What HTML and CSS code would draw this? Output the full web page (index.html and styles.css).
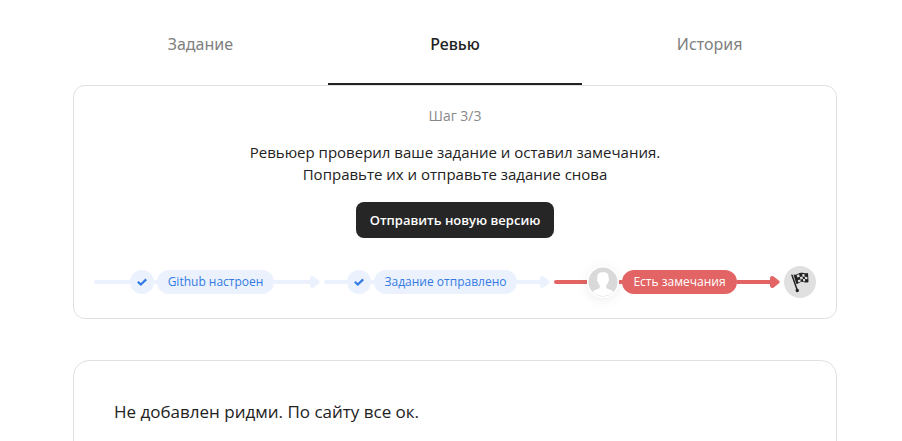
FILE: index.html
```html
<!DOCTYPE html>
<html lang="ru">
<head>
<meta charset="utf-8">
<meta name="viewport" content="width=device-width, initial-scale=1">
<title>Ревью</title>
<link rel="stylesheet" href="styles.css">
</head>
<body>
<main class="page">
  <nav class="tabs">
    <a class="tab" href="#task">Задание</a>
    <a class="tab tab-active" href="#review" aria-current="page">Ревью</a>
    <a class="tab" href="#history">История</a>
  </nav>
  <section class="card status">
    <p class="step-count">Шаг 3/3</p>
    <p class="message">Ревьюер проверил ваше задание и оставил замечания.<br>Поправьте их и отправьте задание снова</p>
    <button class="submit" type="button">Отправить новую версию</button>
    <div class="progress">
      <div class="step">
        <span class="line line-start"></span>
        <span class="mark"><svg width="10" height="8" viewBox="0 0 10 8"><path d="M.8 3.700 3.800 6.500 9.200 1.400" fill="none" stroke="currentColor" stroke-width="2.200"/></svg></span>
        <span class="line line-link"></span>
        <span class="pill">Github настроен</span>
        <span class="line"></span>
        <svg class="arrow" width="10" height="12" viewBox="0 0 10 12"><path d="M0 2.200C0 .2 2.200-.6 3.700.6L9 4.700c.9.7.9 1.900 0 2.600l-5.300 4.100C2.200 12.600 0 11.800 0 9.800z" fill="currentColor"/></svg>
      </div>
      <div class="step">
        <span class="line line-start"></span>
        <span class="mark"><svg width="10" height="8" viewBox="0 0 10 8"><path d="M.8 3.700 3.800 6.500 9.200 1.400" fill="none" stroke="currentColor" stroke-width="2.200"/></svg></span>
        <span class="line line-link"></span>
        <span class="pill">Задание отправлено</span>
        <span class="line"></span>
        <svg class="arrow" width="10" height="12" viewBox="0 0 10 12"><path d="M0 2.200C0 .2 2.200-.6 3.700.6L9 4.700c.9.7.9 1.900 0 2.600l-5.300 4.100C2.200 12.600 0 11.800 0 9.800z" fill="currentColor"/></svg>
      </div>
      <div class="step step-current">
        <span class="line line-start"></span>
        <svg class="avatar" width="32" height="32" viewBox="0 0 32 32">
          <circle cx="16" cy="16" r="16" fill="#fff"/>
          <circle cx="16" cy="16" r="14.500" fill="#d9d9d9"/>
          <path d="M16.200 6.200c3.800-.5 6 2.200 5.400 6.100.8.3.5 2.700-.4 3.300-.3 1.800-1 2.800-1.900 3.700v2.500c.8 1.500 5 1.700 7 4a14.500 14.500 0 0 1-20.600 0c2-2.300 6.200-2.500 7-4v-2.500c-.9-.9-1.600-1.900-1.900-3.700-.9-.6-1.200-3-.4-3.300-.9-3.600 1.500-6.700 5.800-6.100z" fill="#fff"/>
        </svg>
        <span class="line line-link"></span>
        <span class="pill">Есть замечания</span>
        <span class="line"></span>
        <svg class="arrow" width="10" height="12" viewBox="0 0 10 12"><path d="M0 2.200C0 .2 2.200-.6 3.700.6L9 4.700c.9.7.9 1.900 0 2.600l-5.300 4.100C2.200 12.600 0 11.800 0 9.800z" fill="currentColor"/></svg>
      </div>
      <span class="finish">
        <svg width="32" height="32" viewBox="0 0 32 32">
          <path d="M8 9.200 13.200 24" fill="none" stroke="#222" stroke-width="1.500" stroke-linecap="round"/>
          <circle cx="13.300" cy="24.500" r="1.700" fill="#222"/>
          <path d="M9.500 8.500c3 1.500 5-2 8-1.800 2.500.1 4 1 6.500.3l.5 9c-3 1.400-4.500-.5-7-.2-2.500.4-3 2.700-5.300 2z" fill="#222"/>
          <path d="m12.700 9.300 2.400-1.100.7 2.500-2.300.9zM18.200 7.900l2.300.4.2 2.400-2.200-.2zM15.900 10.900l2.600-.4.3 2.500-2.300.5zM20.800 10.700l2.500.2.100 2.300-2.400-.2zM13.700 14.200l2.700-.6.400 1.900-2.300 1zM18.900 13.100l2 0 .3 2.300-2.100-.3z" fill="#e0e0e0"/>
        </svg>
      </span>
    </div>
  </section>
  <section class="card comment">
    <p class="comment-text">Не добавлен ридми. По сайту все ок.</p>
  </section>
</main>
</body>
</html>
```
FILE: styles.css
```css
* {
  box-sizing: border-box;
}

body {
  margin: 0;
  padding-left: 8px;
  background: #fff;
  color: #222;
  font-family: "Open Sans", "Noto Sans", sans-serif;
  font-size: 15px;
  line-height: 22px;
}

p {
  margin: 0;
}

.page {
  max-width: 764px;
  margin: 0 auto;
}

.tabs {
  display: grid;
  grid-template-columns: repeat(3, 1fr);
}

.tab {
  padding: 33px 0 30px;
  color: #808080;
  font-family: "Noto Sans", sans-serif;
  font-size: 16px;
  text-align: center;
  text-decoration: none;
}

.tab-active {
  padding-bottom: 28px;
  border-bottom: 2px solid #222;
  color: #222;
  font-weight: 500;
}

.card {
  border: 1px solid #e0e0e0;
  border-radius: 12px;
}

.status {
  display: flex;
  flex-direction: column;
  align-items: center;
  padding: 20px;
}

.step-count {
  color: #888;
  font-size: 14px;
  line-height: 20px;
}

.message {
  margin-top: 15px;
  text-align: center;
}

.submit {
  height: 36px;
  margin-top: 17px;
  padding: 0 14px;
  border: 0;
  border-radius: 8px;
  background: #262626;
  color: #fff;
  font-family: inherit;
  font-size: 13px;
  font-weight: 600;
}

.progress {
  display: flex;
  align-items: center;
  align-self: stretch;
  gap: 4px;
  margin-top: 28px;
}

.step {
  display: flex;
  flex: 1;
  align-items: center;
  color: #ebf2fe;
}

.step-current {
  color: #e26464;
}

.line {
  flex: 1;
  height: 4px;
  background: currentColor;
}

.line-start {
  border-radius: 2px 0 0 2px;
}

.line-link {
  flex: 0 0 3px;
}

.mark {
  display: flex;
  align-items: center;
  justify-content: center;
  width: 24px;
  height: 24px;
  border-radius: 50%;
  background: #ebf2fe;
  color: #347ae2;
}

.pill {
  padding: 0 11px;
  border-radius: 12px;
  background: #ebf2fe;
  color: #347ae2;
  font-size: 12px;
  font-weight: 500;
  line-height: 24px;
  white-space: nowrap;
}

.step-current .pill {
  background: #e26464;
  color: #fff;
}

.avatar {
  border-radius: 50%;
  box-shadow: 0 2px 12px rgba(0, 0, 0, 0.08);
}

.finish {
  display: flex;
  border-radius: 50%;
  background: #e0e0e0;
}

.comment {
  margin-top: 41px;
  padding: 39px 40px;
  border-radius: 16px;
}

.comment-text {
  font-size: 17px;
  line-height: 24px;
}
```
